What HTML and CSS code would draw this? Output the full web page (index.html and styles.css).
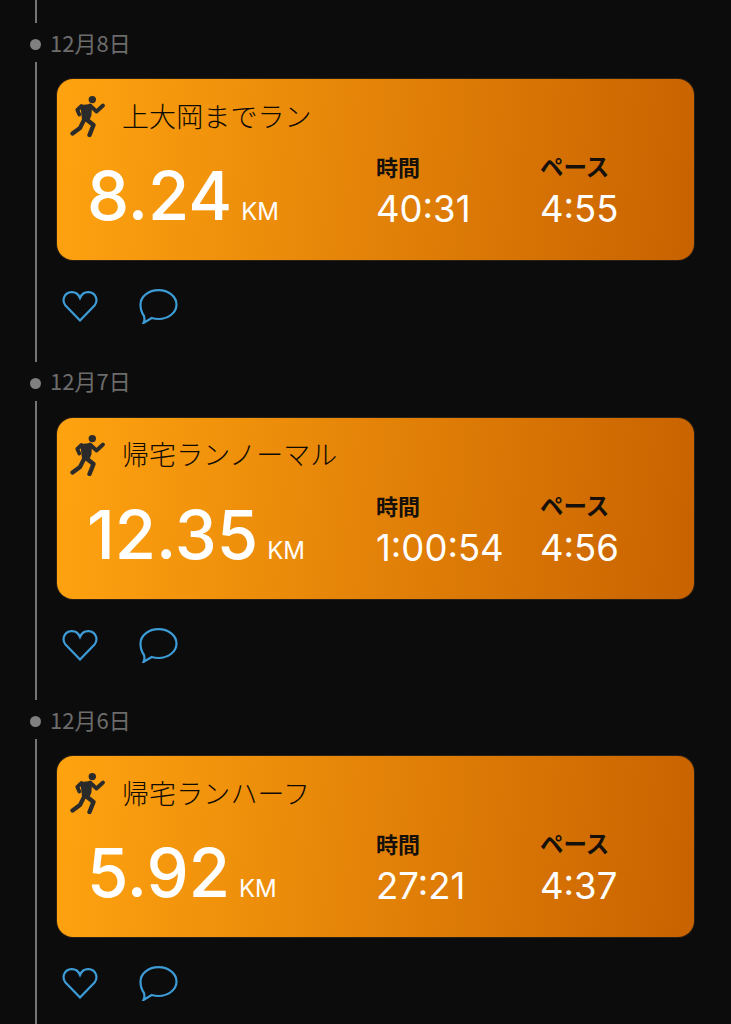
FILE: index.html
```html
<!DOCTYPE html>
<html lang="ja">
<head>
  <meta charset="UTF-8" />
  <meta name="viewport" content="width=device-width, initial-scale=1" />
  <title>ランニング記録</title>
  <link rel="stylesheet" href="styles.css">
</head>
<body>
  <svg class="sprites" width="0" height="0">
    <symbol id="runner" viewBox="0 0 36 42">
      <circle cx="22.3" cy="4.6" r="3.7" fill="#2b2b2b" stroke="none"/>
      <path d="M11.5 11 L21 10 L20.5 20 L18 26 L13 25 Z" fill="#2b2b2b" stroke-width="2"/>
      <path d="M20 10.5 L26.5 16.5 L33 10.5 M11.5 11 L7.3 15 L9.3 19.5"/>
      <path d="M14 25 L10 33 L2.5 38.5" stroke-width="4.2"/>
      <path d="M16.5 24.5 L23.5 30 L19.5 40" stroke-width="4.4"/>
    </symbol>
    <symbol id="heart" viewBox="0 0 36 31">
      <path d="M18 29.5 L3.5 14.5 C-0.5 9.5 2 1.5 9.5 1.2 C13.5 1 16.5 3.5 18 7 C19.5 3.5 22.5 1 26.5 1.2 C34 1.5 36.5 9.5 32.5 14.5 Z"/>
    </symbol>
    <symbol id="bubble" viewBox="0 0 39 35">
      <path d="M19.5 1.2 C29.5 1.2 37.5 7.5 37.5 15.5 C37.5 23.5 29.5 30 19.5 30 C17 30 14.8 29.6 12.7 29 L4.5 34 C5.5 32 5.8 30 5 27 C2.8 24 1.5 20 1.5 15.5 C1.5 7.5 9.5 1.2 19.5 1.2 Z"/>
    </symbol>
  </svg>

  <div class="rail-top"></div>

  <section class="day">
    <div class="day-head"><span class="dot"></span><span class="date">12月8日</span></div>
    <div class="day-body">
      <div class="card">
        <div class="card-title">
          <svg class="runner"><use href="#runner"/></svg>
          <span>上大岡までラン</span>
        </div>
        <div class="stats">
          <div class="distance"><span class="km-value">8.24</span><span class="km-unit">KM</span></div>
          <div class="stat"><div class="stat-label">時間</div><div class="stat-value">40:31</div></div>
          <div class="stat"><div class="stat-label kana">ペース</div><div class="stat-value">4:55</div></div>
        </div>
      </div>
      <div class="actions">
        <svg class="heart"><use href="#heart"/></svg>
        <svg class="bubble"><use href="#bubble"/></svg>
      </div>
    </div>
  </section>

  <section class="day">
    <div class="day-head"><span class="dot"></span><span class="date">12月7日</span></div>
    <div class="day-body">
      <div class="card">
        <div class="card-title">
          <svg class="runner"><use href="#runner"/></svg>
          <span>帰宅ランノーマル</span>
        </div>
        <div class="stats">
          <div class="distance"><span class="km-value">12.35</span><span class="km-unit">KM</span></div>
          <div class="stat"><div class="stat-label">時間</div><div class="stat-value">1:00:54</div></div>
          <div class="stat"><div class="stat-label kana">ペース</div><div class="stat-value">4:56</div></div>
        </div>
      </div>
      <div class="actions">
        <svg class="heart"><use href="#heart"/></svg>
        <svg class="bubble"><use href="#bubble"/></svg>
      </div>
    </div>
  </section>

  <section class="day">
    <div class="day-head"><span class="dot"></span><span class="date">12月6日</span></div>
    <div class="day-body">
      <div class="card">
        <div class="card-title">
          <svg class="runner"><use href="#runner"/></svg>
          <span>帰宅ランハーフ</span>
        </div>
        <div class="stats">
          <div class="distance"><span class="km-value">5.92</span><span class="km-unit">KM</span></div>
          <div class="stat"><div class="stat-label">時間</div><div class="stat-value">27:21</div></div>
          <div class="stat"><div class="stat-label kana">ペース</div><div class="stat-value">4:37</div></div>
        </div>
      </div>
      <div class="actions">
        <svg class="heart"><use href="#heart"/></svg>
        <svg class="bubble"><use href="#bubble"/></svg>
      </div>
    </div>
  </section>
</body>
</html>
```
FILE: styles.css
```css
html {
  height: 100%;
  overflow: hidden;
}
body {
  margin: 0;
  height: 1024px;
  overflow: hidden;
  background: #0c0c0d;
  font-family: Inter, "Noto Sans CJK JP", sans-serif;
}
.sprites {
  display: block;
  position: absolute;
}
.rail-top {
  width: 2px;
  height: 23px;
  margin-left: 35px;
  background: #757575;
}
.day-head {
  display: flex;
  align-items: center;
  gap: 9px;
  height: 39px;
  padding-left: 30px;
}
.dot {
  width: 11px;
  height: 11px;
  margin-top: 4px;
  border-radius: 50%;
  background: #808080;
}
.date {
  font-family: "Noto Sans CJK JP", sans-serif;
  font-size: 22px;
  line-height: 42px;
  margin-bottom: 2px;
  color: #6c6c6c;
}
.day-body {
  height: 299.5px;
  margin-left: 35px;
  padding: 17px 0 0 20px;
  box-sizing: border-box;
  border-left: 2px solid #757575;
}
.card {
  width: 637px;
  height: 181px;
  box-sizing: border-box;
  border-radius: 16px;
  background: linear-gradient(95deg, #ffa310 0%, #c86200 100%);
  box-shadow: 0 0 0 1px #2a2016;
}
.card-title {
  display: flex;
  align-items: center;
  height: 72px;
  padding-left: 13px;
  font-family: "Noto Sans CJK JP", sans-serif;
  font-size: 27px;
  font-weight: 300;
  letter-spacing: 0.1px;
  color: #0d0a04;
}
.runner {
  width: 36px;
  height: 42px;
  margin: 2px 16px 0 0;
  fill: none;
  stroke: #2b2b2b;
  stroke-width: 3.8;
  stroke-linecap: round;
  stroke-linejoin: round;
}
.stats {
  display: grid;
  grid-template-columns: 289px 164px 1fr;
  padding-left: 30px;
  margin-top: 2px;
}
.distance {
  display: flex;
  align-items: baseline;
  margin-top: 4px;
  color: #fff;
}
.km-value {
  font-size: 67px;
  font-weight: 500;
  line-height: 78px;
}
.km-unit {
  margin-left: 9px;
  font-size: 24px;
}
.stat-label {
  font-family: "Noto Sans CJK JP", sans-serif;
  font-size: 22px;
  font-weight: 700;
  line-height: 26px;
  color: #15100a;
}
.stat-label.kana {
  font-size: 23.5px;
}
.stat-value {
  margin-top: 7px;
  font-size: 36.5px;
  line-height: 46px;
  color: #fff;
}
.actions {
  display: flex;
  align-items: flex-start;
  gap: 41px;
  margin-top: 29px;
  padding-left: 5px;
  fill: none;
  stroke: #3d9bd6;
  stroke-width: 2.2;
}
.heart {
  width: 36px;
  height: 31px;
  margin-top: 2px;
}
.bubble {
  width: 39px;
  height: 35px;
}
```
